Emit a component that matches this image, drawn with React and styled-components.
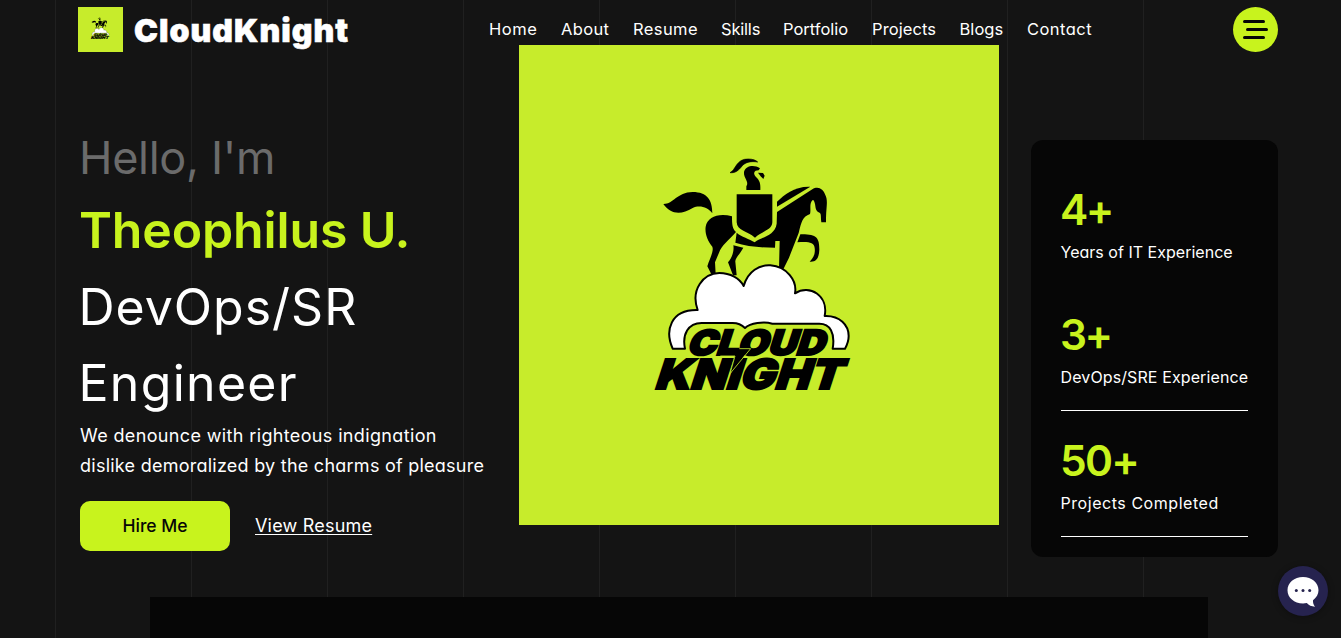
import React from 'react';
import styled, { createGlobalStyle } from 'styled-components';

const lime = '#c8f31d';

const GlobalStyle = createGlobalStyle`
  * { box-sizing: border-box; }
  body {
    margin: 0;
    overflow: hidden;
    background: #141414;
    color: #fff;
    font-family: Inter, sans-serif;
    font-feature-settings: "cv11";
  }
`;

const Page = styled.div`
  position: relative;
  height: 638px;
  overflow: hidden;
  background: #141414;
`;

const GridLines = styled.div`
  position: absolute;
  inset: 0;
  display: flex;
  padding-left: 55px;
  overflow: hidden;
`;

const GridColumn = styled.div`
  flex: 0 0 135.94px;
  border-left: 1px solid #202020;
`;

const Content = styled.div`
  position: relative;
  width: 1200px;
  margin-left: 78px;
`;

const Header = styled.header`
  display: flex;
  align-items: center;
  height: 52px;
  padding-top: 7px;
`;

const Brand = styled.a`
  display: flex;
  align-items: center;
  gap: 11px;
  width: 411px;
`;

const BrandName = styled.span`
  padding-top: 2px;
  font-size: 32px;
  font-weight: 900;
  line-height: 43px;
  letter-spacing: 1.05px;
  -webkit-text-stroke: 0.6px #fff;
`;

const Nav = styled.nav`
  display: flex;
  flex: 1;
  padding-bottom: 2px;
`;

const NavLink = styled.a`
  width: ${p => p.$width}px;
  font-size: 16.5px;
  line-height: 24px;
  letter-spacing: ${p => p.$tracking}px;
  white-space: nowrap;
`;

const MenuButton = styled.button`
  display: flex;
  flex-direction: column;
  justify-content: center;
  gap: 5px;
  width: 45px;
  height: 45px;
  padding: 0 10px;
  border: 0;
  border-radius: 50%;
  background: ${lime};
`;

const MenuBar = styled.span`
  width: 22px;
  height: 3px;
  margin-left: ${p => (p.$shifted ? 3 : 0)}px;
  border-radius: 2px;
  background: #060606;
`;

const Hero = styled.main`
  display: flex;
  align-items: flex-start;
  height: 545px;
`;

const Intro = styled.section`
  width: 441px;
  padding: 72px 0 0 2px;
`;

const Title = styled.h1`
  margin: 0;
  font-weight: 400;
`;

const TitleLine = styled.span`
  display: block;
  margin-left: ${p => p.$shift || 0}px;
  color: ${p => p.$color || '#fff'};
  font-size: ${p => p.$size}px;
  font-weight: ${p => p.$weight || 400};
  line-height: ${p => p.$line}px;
  letter-spacing: ${p => p.$tracking || 0}px;
  white-space: nowrap;
`;

const Lead = styled.p`
  margin: 0;
  font-size: 18px;
  line-height: 30px;
  white-space: nowrap;
`;

const LeadLine = styled.span`
  display: block;
  letter-spacing: ${p => p.$tracking}px;
`;

const Actions = styled.div`
  display: flex;
  align-items: center;
  gap: 25px;
  margin-top: 20px;
`;

const HireButton = styled.button`
  width: 150px;
  height: 50px;
  padding: 0;
  border: 0;
  border-radius: 10px;
  background: ${lime};
  color: #060606;
  font: 500 17.5px/50px Inter, sans-serif;
`;

const ResumeLink = styled.a`
  padding-bottom: 2px;
  font-size: 18px;
  letter-spacing: 0.2px;
  text-decoration: underline;
  text-decoration-thickness: 1px;
  text-underline-offset: 2px;
`;

const Portrait = styled.div`
  width: 480px;
  height: 480px;
  margin: -7px 32px 0 0;
`;

const Stats = styled.aside`
  width: 247px;
  height: 417px;
  margin-top: 88px;
  padding: 20px 30px;
  border-radius: 12px;
  background: #060606;
`;

const Stat = styled.div`
  height: 125.67px;
  padding-top: 23.5px;
  border-bottom: 1px solid ${p => (p.$ruled ? '#fff' : 'transparent')};
`;

const StatValue = styled.div`
  margin-left: -1px;
  color: ${lime};
  font-size: 42.5px;
  font-weight: 600;
  line-height: 51px;
  letter-spacing: ${p => p.$tracking}px;
`;

const StatLabel = styled.div`
  margin: 4px 0 0 -0.5px;
  font-size: 16px;
  line-height: 26px;
  letter-spacing: ${p => p.$tracking}px;
  white-space: nowrap;
`;

const NextPanel = styled.section`
  width: 1058px;
  height: 41px;
  margin-left: 72px;
  background: #060606;
`;

const ChatButton = styled.button`
  position: absolute;
  right: 13px;
  bottom: 22px;
  width: 50px;
  height: 50px;
  padding: 0;
  border: 0;
  border-radius: 50%;
  background: #26234f;
  box-shadow: 0 1px 6px rgba(0, 0, 0, 0.35);
`;

const Svg = styled.svg`
  display: block;
  flex: none;
`;

function Emblem({ size }) {
  return (
    <Svg width={size} height={size} viewBox="0 0 1440 1440" role="img" aria-label="Cloud Knight">
      <rect width="1440" height="1440" fill="#c7ec2b" />
      <g transform="translate(361 300)" fill="#000">
        <path d="M72 177C102 178 112 142 160 141C204 141 219 166 219 205C206 187 181 179 160 189C125 211 93 208 72 177Z" />
        <path d="M272 83C290 75 290 41 327 42C340 42 350 46 355 51C335 48 319 51 309 62C298 76 288 85 272 83Z" stroke="#000" strokeWidth="2" />
        <path d="M321 135V124C331 111 312 99 314 81C319 62 344 58 362 70L358 76C343 76 341 87 350 96C361 106 364 116 363 135Z" />
        <path d="M356 83L371 84L376 92L372 102L364 94Z" />
        <path d="M292 148H399V232C398 256 370 257 347 278C323 258 293 257 292 232Z" />
        <path d="M278 214C278 239 279 251 290 261C268 287 247 300 239 323L227 352L229 388H216L204 364C212 338 224 319 219 305C205 288 196 266 199 245C204 216 238 203 278 214Z" />
        <path d="M282 301L312 308C302 327 287 340 288 350L292 391H281L266 352C278 339 285 318 282 301Z" />
        <path d="M413 201L519 133C536 122 552 132 558 150C567 169 560 183 560 232H546C543 207 548 206 535 200C525 192 531 174 521 164C508 175 516 193 512 207C489 216 487 229 478 264L449 338L432 373L419 372L421 288H408L407 308C365 308 321 304 288 293L292 263C305 276 331 281 346 292C367 276 407 272 412 236Z" />
        <path d="M413 185V170C435 149 466 123 513 125Z" />
        <path d="M483 268C532 267 540 278 540 314C539 340 530 352 511 350C518 342 529 331 526 309C524 291 507 290 474 292Z" />
      </g>
      <g transform="translate(361 630)">
        <path
          d="M100 281C76 227 93 163 175 165C153 104 192 55 240 54C273 54 301 70 313 93C326 48 361 29 393 31C443 35 474 77 467 115C511 87 568 122 556 183C602 181 628 211 628 243C628 261 622 272 617 281H580C588 233 572 206 540 206H399C373 199 333 204 317 219C305 207 295 204 280 204H187C146 204 128 239 137 281Z"
          fill="#fff"
          stroke="#000"
          strokeWidth="6"
          strokeLinejoin="round"
        />
        <g fontFamily="Inter, sans-serif" fontWeight="900" fill="#000" stroke="#000" strokeWidth="6">
          <text transform="translate(140 300) skewX(-18)" fontSize="104" textLength="412" lengthAdjust="spacingAndGlyphs">CLOUD</text>
          <text transform="translate(43 402) skewX(-18)" fontSize="124" textLength="560" lengthAdjust="spacingAndGlyphs">KNIGHT</text>
        </g>
        <path d="M250 278L334 278L272 356L286 303H243Z" fill="#000" />
        <path d="M300 281H334L272 356M243 303H287L272 356" fill="none" stroke="#c7ec2b" strokeWidth="2.5" />
      </g>
    </Svg>
  );
}

const links = [
  ['Home', 72, 0.55],
  ['About', 72, 0.35],
  ['Resume', 88, 0.4],
  ['Skills', 62, -0.2],
  ['Portfolio', 89, 0],
  ['Projects', 87.5, 0.1],
  ['Blogs', 67.5, 0.05],
  ['Contact', 70, 0.45],
];

const stats = [
  { value: '4+', label: 'Years of IT Experience', valueTracking: -2.5, labelTracking: 0.02 },
  { value: '3+', label: 'DevOps/SRE Experience', valueTracking: -2.5, labelTracking: 0.11, ruled: true },
  { value: '50+', label: 'Projects Completed', valueTracking: -1.7, labelTracking: 0.55, ruled: true },
];

export default function App() {
  return (
    <Page>
      <GlobalStyle />
      <GridLines>
        {Array.from({ length: 9 }, (_, i) => <GridColumn key={i} />)}
      </GridLines>
      <Content>
        <Header>
          <Brand>
            <Emblem size={45} />
            <BrandName>CloudKnight</BrandName>
          </Brand>
          <Nav>
            {links.map(([label, width, tracking]) => (
              <NavLink key={label} $width={width} $tracking={tracking}>{label}</NavLink>
            ))}
          </Nav>
          <MenuButton aria-label="Menu">
            <MenuBar />
            <MenuBar $shifted />
            <MenuBar />
          </MenuButton>
        </Header>
        <Hero>
          <Intro>
            <Title>
              <TitleLine $size={45} $line={68} $color="#6b6b6b" $shift={-1} $tracking={-0.3}>Hello, I'm</TitleLine>
              <TitleLine $size={50} $line={77} $color={lime} $weight={600} $shift={-1} $tracking={-0.15}>Theophilus U.</TitleLine>
              <TitleLine $size={50} $line={76} $tracking={1} $shift={-1.5}>DevOps/SR</TitleLine>
              <TitleLine $size={50} $line={76} $tracking={1.3} $shift={-1.5}>Engineer</TitleLine>
            </Title>
            <Lead>
              <LeadLine $tracking={0.36}>We denounce with righteous indignation</LeadLine>
              <LeadLine $tracking={0.25}>dislike demoralized by the charms of pleasure</LeadLine>
            </Lead>
            <Actions>
              <HireButton>Hire Me</HireButton>
              <ResumeLink>View Resume</ResumeLink>
            </Actions>
          </Intro>
          <Portrait>
            <Emblem size={480} />
          </Portrait>
          <Stats>
            {stats.map(s => (
              <Stat key={s.value} $ruled={s.ruled}>
                <StatValue $tracking={s.valueTracking}>{s.value}</StatValue>
                <StatLabel $tracking={s.labelTracking}>{s.label}</StatLabel>
              </Stat>
            ))}
          </Stats>
        </Hero>
        <NextPanel />
      </Content>
      <ChatButton aria-label="Chat">
        <Svg width="50" height="50" viewBox="0 0 50 50">
          <path d="M25 11C33.700 11 40.500 16.800 40.500 24.200C40.500 28.200 38.500 31.500 35 34.200C34.800 36.800 35.500 38.800 37 40.700C33.500 40.700 30.800 39.300 28.800 37.100C18 39 9.500 32.500 9.500 24.200C9.500 16.800 16.300 11 25 11Z" fill="#fff" />
          <g fill="#26234f">
            <circle cx="18.300" cy="24.500" r="1.500" />
            <circle cx="25" cy="24.500" r="1.500" />
            <circle cx="31.700" cy="24.500" r="1.500" />
          </g>
        </Svg>
      </ChatButton>
    </Page>
  );
}
